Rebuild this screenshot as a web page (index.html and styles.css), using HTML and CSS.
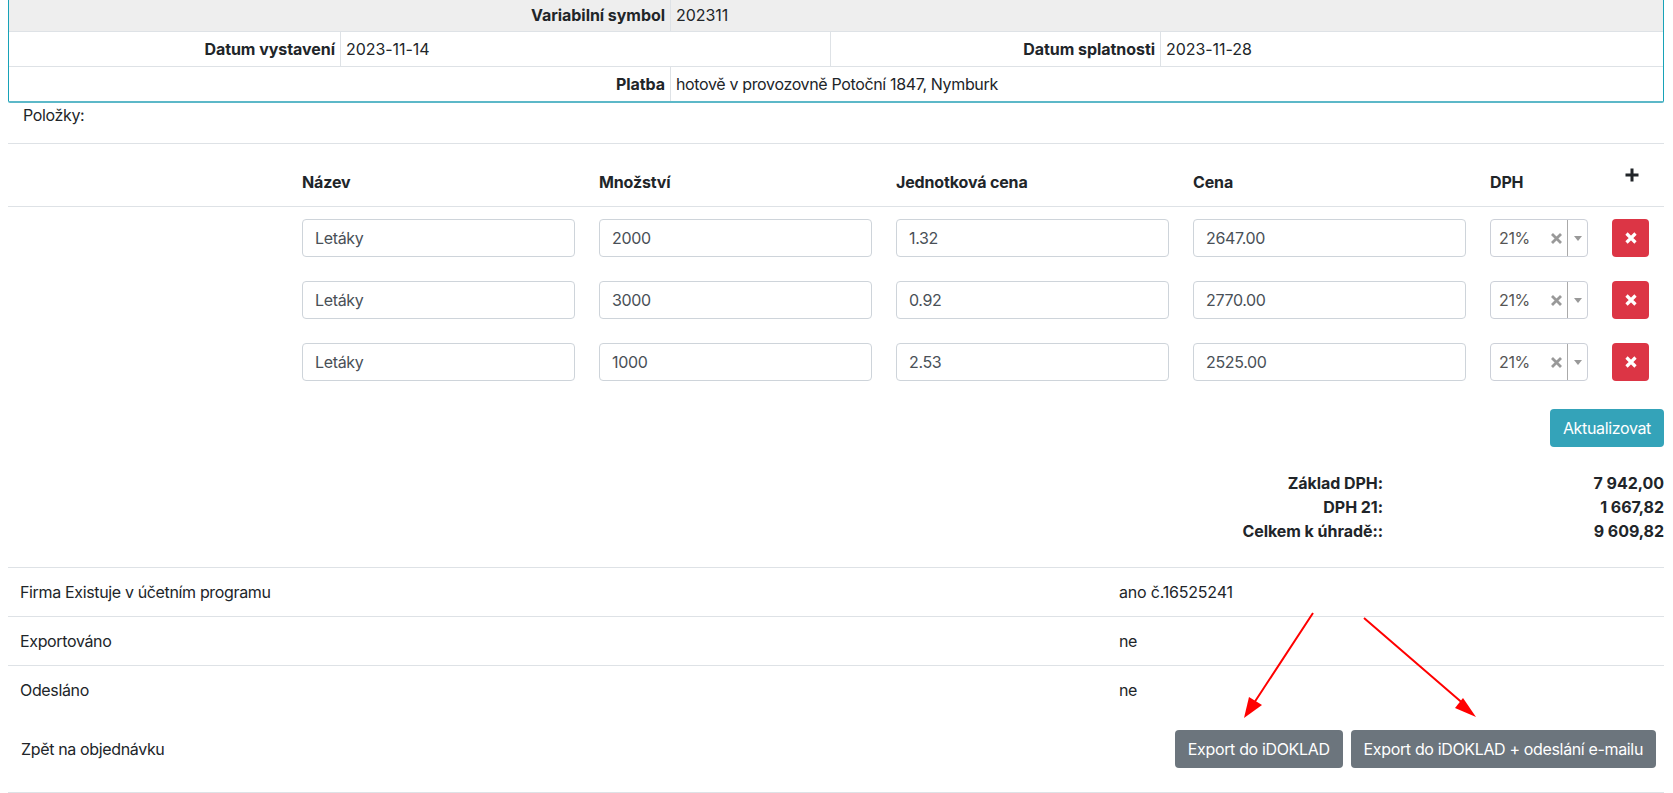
FILE: index.html
```html
<!DOCTYPE html>
<html lang="cs">
<head>
<meta charset="utf-8">
<title>Faktura</title>
<link rel="stylesheet" href="styles.css">
</head>
<body>
<main class="page">
  <section class="meta">
    <div class="meta-row meta-row-head meta-split">
      <div class="meta-label">Variabilní symbol</div>
      <div class="meta-value meta-num">202311</div>
    </div>
    <div class="meta-row meta-quad">
      <div class="meta-label">Datum vystavení</div>
      <div class="meta-value meta-value-mid meta-num">2023-11-14</div>
      <div class="meta-label">Datum splatnosti</div>
      <div class="meta-value meta-num">2023-11-28</div>
    </div>
    <div class="meta-row meta-row-last meta-split">
      <div class="meta-label">Platba</div>
      <div class="meta-value">hotově v provozovně Potoční 1847, Nymburk</div>
    </div>
  </section>

  <div class="items-title">Položky:</div>

  <table class="items">
    <colgroup>
      <col class="col-blank"><col class="col-field"><col class="col-field"><col class="col-field"><col class="col-field"><col class="col-vat"><col class="col-act">
    </colgroup>
    <thead>
      <tr>
        <th></th>
        <th>Název</th>
        <th>Množství</th>
        <th>Jednotková cena</th>
        <th>Cena</th>
        <th>DPH</th>
        <th class="th-add"><svg class="plus" viewBox="0 0 14 14" width="14" height="14"><path d="M7 0.5v13M0.5 7h13" stroke="#212529" stroke-width="3" fill="none"/></svg></th>
      </tr>
    </thead>
    <tbody>
      <tr>
        <td></td>
        <td><input class="field" value="Letáky"></td>
        <td><input class="field" value="2000"></td>
        <td><input class="field" value="1.32"></td>
        <td><input class="field" value="2647.00"></td>
        <td>
          <div class="select"><span class="select-text">21%</span><svg class="select-clear" viewBox="0 0 11 11" width="11" height="11"><path d="M1 1l9 9M10 1l-9 9" stroke="#999" stroke-width="2.8" fill="none"/></svg><span class="select-arrow"></span></div>
        </td>
        <td><button class="btn btn-danger btn-icon"><svg viewBox="0 0 12 12" width="12" height="12"><path d="M1.5 1.5l9 9M10.5 1.5l-9 9" stroke="#fff" stroke-width="3.2" fill="none"/></svg></button></td>
      </tr>
      <tr>
        <td></td>
        <td><input class="field" value="Letáky"></td>
        <td><input class="field" value="3000"></td>
        <td><input class="field" value="0.92"></td>
        <td><input class="field" value="2770.00"></td>
        <td>
          <div class="select"><span class="select-text">21%</span><svg class="select-clear" viewBox="0 0 11 11" width="11" height="11"><path d="M1 1l9 9M10 1l-9 9" stroke="#999" stroke-width="2.8" fill="none"/></svg><span class="select-arrow"></span></div>
        </td>
        <td><button class="btn btn-danger btn-icon"><svg viewBox="0 0 12 12" width="12" height="12"><path d="M1.5 1.5l9 9M10.5 1.5l-9 9" stroke="#fff" stroke-width="3.2" fill="none"/></svg></button></td>
      </tr>
      <tr>
        <td></td>
        <td><input class="field" value="Letáky"></td>
        <td><input class="field" value="1000"></td>
        <td><input class="field" value="2.53"></td>
        <td><input class="field" value="2525.00"></td>
        <td>
          <div class="select"><span class="select-text">21%</span><svg class="select-clear" viewBox="0 0 11 11" width="11" height="11"><path d="M1 1l9 9M10 1l-9 9" stroke="#999" stroke-width="2.8" fill="none"/></svg><span class="select-arrow"></span></div>
        </td>
        <td><button class="btn btn-danger btn-icon"><svg viewBox="0 0 12 12" width="12" height="12"><path d="M1.5 1.5l9 9M10.5 1.5l-9 9" stroke="#fff" stroke-width="3.2" fill="none"/></svg></button></td>
      </tr>
    </tbody>
  </table>

  <div class="update-row"><button class="btn btn-info">Aktualizovat</button></div>

  <div class="totals">
    <div class="total-label">Základ DPH:</div><div class="total-value">7 942,00</div>
    <div class="total-label">DPH 21:</div><div class="total-value">1 667,82</div>
    <div class="total-label">Celkem k úhradě::</div><div class="total-value">9 609,82</div>
  </div>

  <section class="info">
    <div class="info-row"><div>Firma Existuje v účetním programu</div><div class="info-num">ano č.16525241</div></div>
    <div class="info-row"><div>Exportováno</div><div>ne</div></div>
    <div class="info-row"><div>Odesláno</div><div>ne</div></div>
  </section>

  <footer class="actions">
    <div class="back">Zpět na objednávku</div>
    <div class="action-buttons">
      <button class="btn btn-secondary">Export do iDOKLAD</button>
      <button class="btn btn-secondary">Export do iDOKLAD + odeslání e-mailu</button>
    </div>
  </footer>
</main>

<svg class="arrows" viewBox="0 0 1673 793" width="1673" height="793">
  <path d="M1313 613L1254 703M1364 618L1466 706" stroke="#ff0000" stroke-width="2" fill="none"/>
  <path d="M1244 718L1249 697L1262 705Z" fill="#ff0000"/>
  <path d="M1476 717L1455 708L1463 698Z" fill="#ff0000"/>
</svg>
</body>
</html>
```

FILE: styles.css
```css
* { box-sizing: border-box; }

html, body { margin: 0; padding: 0; }

body {
  font-family: Inter, "Liberation Sans", sans-serif;
  font-size: 16px;
  line-height: 24px;
  letter-spacing: -0.35px;
  color: #212529;
  background: #fff;
  height: 793px;
  overflow: hidden;
}

.page { padding: 0 9px 0 8px; }

/* Invoice meta table */
.meta {
  border-left: 1px solid #17a2b8;
  border-right: 1px solid #17a2b8;
  border-bottom: 2px solid #5cb8c8;
  border-bottom-left-radius: 2px;
  border-bottom-right-radius: 2px;
}

.meta-row {
  display: grid;
  border-bottom: 1px solid #dee2e6;
}

.meta-row-last { border-bottom: 0; }
.meta-row-head { background: #eee; }
.meta-split { grid-template-columns: 662px 1fr; }
.meta-quad { grid-template-columns: 332px 490px 330px 1fr; }

.meta-label,
.meta-value {
  padding: 5px;
}

.meta-num { letter-spacing: -0.05px; }
.meta-value-mid { border-right: 1px solid #dee2e6; }

.meta-row-head .meta-label,
.meta-row-head .meta-value { padding-top: 3px; padding-bottom: 4px; }

.meta-label {
  font-weight: 700;
  letter-spacing: -0.05px;
  text-align: right;
  border-right: 1px solid #dee2e6;
  padding-right: 5px;
}

.items-title {
  padding: 0 15px;
  height: 41px;
  border-bottom: 1px solid #dee2e6;
}

/* Items */
.items {
  width: 100%;
  table-layout: fixed;
  border-collapse: collapse;
}

.col-blank { width: 282px; }
.col-field { width: 297px; }
.col-vat { width: 122px; }
.col-act { width: 64px; }

.items th {
  padding: 26px 12px 12px;
  text-align: left;
  font-weight: 700;
  letter-spacing: -0.15px;
  border-bottom: 1px solid #dee2e6;
  vertical-align: bottom;
}

.items th.th-add {
  text-align: center;
  padding: 0 0 24px;
}

.plus { display: block; margin: 0 auto; }

.items td { padding: 12px; }

.field {
  display: block;
  width: 100%;
  height: 38px;
  padding: 6px 12px;
  border: 1px solid #ced4da;
  border-radius: 4px;
  font: inherit;
  letter-spacing: inherit;
  color: #495057;
  background: #fff;
}

.select {
  display: flex;
  align-items: center;
  height: 38px;
  width: 98px;
  border: 1px solid #ccd0d8;
  border-radius: 4px;
  color: #555;
}

.select-text { padding-left: 8px; flex: 1; }

.select-clear { margin-right: 5px; }

.select-arrow {
  display: flex;
  align-items: center;
  justify-content: center;
  width: 20px;
  height: 100%;
  border-left: 1px solid #aaa;
}

.select-arrow::before {
  content: "";
  border-top: 5px solid #999;
  border-left: 4px solid transparent;
  border-right: 4px solid transparent;
}

.btn {
  display: inline-flex;
  align-items: center;
  justify-content: center;
  height: 38px;
  padding: 6px 12px;
  border: 1px solid transparent;
  border-radius: 4px;
  font: inherit;
  letter-spacing: inherit;
  color: #fff;
}

.btn-danger { background: #dc3545; }
.btn-info { background: #34a3b9; }
.btn-secondary { background: #6c757d; }
.btn-icon { width: 37px; padding: 0; }

.update-row {
  display: flex;
  justify-content: flex-end;
  margin-top: 16px;
}

/* Totals */
.totals {
  display: grid;
  grid-template-columns: 1375px 1fr;
  margin-top: 24px;
  padding-bottom: 24px;
  font-weight: 700;
  letter-spacing: -0.05px;
  text-align: right;
}

/* Info rows */
.info-row {
  display: grid;
  grid-template-columns: 1099px 1fr;
  padding: 12px;
  border-top: 1px solid #dee2e6;
}

.info-num { letter-spacing: -0.2px; }

.actions {
  display: flex;
  justify-content: space-between;
  align-items: center;
  padding: 16px 8px 24px 13px;
  border-bottom: 1px solid #dee2e6;
}

.action-buttons { display: flex; gap: 8px; }

/* Annotation arrows over the page */
.arrows {
  position: absolute;
  left: 0;
  top: 0;
  pointer-events: none;
}
```
